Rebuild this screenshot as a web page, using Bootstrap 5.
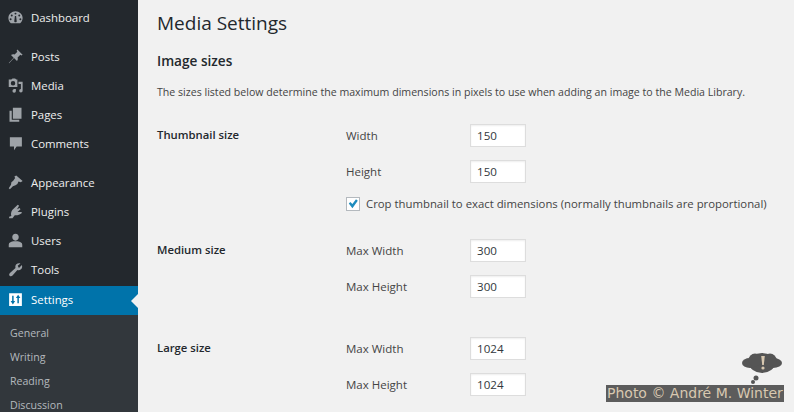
<!DOCTYPE html>
<html lang="en">
<head>
<meta charset="utf-8">
<title>Media Settings</title>
<link href="https://cdn.jsdelivr.net/npm/bootstrap@5.3.0/dist/css/bootstrap.min.css" rel="stylesheet">
<style>
html,body{height:412px;overflow:hidden}
body{background:#f1f1f1;font-family:"Open Sans","Noto Sans",sans-serif;font-size:12px;color:#444}
.wp-side{width:138px;height:412px;background:#23282d;flex:none;overflow:hidden;padding-top:4px}
.wp-group{margin-bottom:10px}
.wp-item{height:29px;padding-left:8px;padding-bottom:2px;gap:8px;color:#eee;font-size:11.4px;position:relative}
.wp-item svg{width:15px;height:15px;fill:#9ea3a8;flex:none}
.wp-item.is-on{background:#0073aa;color:#fff;margin-top:1px}
.wp-item.is-on svg{fill:#fff}
.wp-item.is-on::after{content:"";position:absolute;right:0;top:8px;border:7px solid transparent;border-right-color:#f1f1f1;border-left:0}
.wp-sub{background:#32373c;padding-top:6px;height:100px;margin-top:-10px}
.wp-sub div{height:24px;line-height:24px;padding-left:10px;color:#b4b9be;font-size:10.6px}
.wp-main{padding:0 0 0 19px;flex:1}
.wp-title{font-size:19px;font-weight:400;color:#23282d;margin:0;padding-top:9px;line-height:28px;height:38px}
.wp-h2{font-size:13.6px;font-weight:600;color:#23282d;margin:0;padding-top:13px;line-height:19px;height:46px}
.wp-p{font-size:10.6px;line-height:16px;margin:0 0 24px;color:#444;height:16px;white-space:nowrap}
.wp-row{display:flex}
.wp-th{width:189px;flex:none;font-weight:600;color:#23282d;font-size:11.3px;line-height:17px;padding-top:2px}
.wp-fields{flex:1}
.wp-f{display:flex;align-items:center;height:23px;margin-bottom:13px;font-size:11.5px}
.wp-f label{width:124px;flex:none;margin:0}
.wp-in{width:56px;height:23px;background:#fff;border:1px solid #ddd;box-shadow:inset 0 1px 2px rgba(0,0,0,.07);padding:0 6px;font:11.6px "Open Sans",sans-serif;color:#32373c;border-radius:0;outline:0}
.wp-check{display:flex;align-items:center;gap:6px;height:17px;margin:-1px 0 27px;font-size:11.35px;white-space:nowrap}
.wp-box{width:14px;height:14px;background:#fff;border:1px solid #b4b9be;flex:none;display:flex}
.wp-box svg{width:12px;height:12px;fill:#1e8cbe}
.wp-large{margin-top:26px}
.wp-credit{position:absolute;left:606px;top:385px;width:178px;height:17px;background:#5c5c5c;color:#d8c8b0;font:14px/17px "DejaVu Sans",sans-serif;white-space:nowrap;padding-left:1px;overflow:hidden}
.wp-bubble{position:absolute;left:741px;top:352px;width:42px;height:33px}
</style>
</head>
<body>
<div class="d-flex">
  <nav class="wp-side">
    <div class="wp-group">
      <div class="wp-item d-flex align-items-center"><svg viewBox="0 0 20 20"><path d="M3.800 17.800C1.900 16 .5 13.500.5 10.500.5 5.500 5 1.500 10 1.500s9.500 4 9.500 9c0 3-1.400 5.500-3.300 7.300zM10 3.500a1.300 1.300 0 1 0 0 2.600 1.300 1.300 0 0 0 0-2.600zM5 6a1.300 1.300 0 1 0 0 2.600A1.300 1.300 0 0 0 5 6zm10 0a1.300 1.300 0 1 0 0 2.600A1.300 1.300 0 0 0 15 6zM3.500 11a1.300 1.300 0 1 0 0 2.600 1.300 1.300 0 0 0 0-2.600zm13 0a1.300 1.300 0 1 0 0 2.600 1.300 1.300 0 0 0 0-2.600zM9.200 8l-.7 6a1.700 1.700 0 1 0 3 0l-.7-6z" fill-rule="evenodd"/></svg>Dashboard</div>
    </div>
    <div class="wp-group">
      <div class="wp-item d-flex align-items-center"><svg viewBox="0 0 20 20"><path d="M12.500.5 19.500 7.500 17.800 8.500 16.500 7.500 12.800 11.200c.6 1.800.2 3.600-.8 4.800L8 12 1.500 19 1 18.500 7.500 11.500 4 8c1.200-1.100 3-1.400 4.800-.8L12.500 3.500 11.500 2.200z"/></svg>Posts</div>
      <div class="wp-item d-flex align-items-center"><svg viewBox="0 0 20 20"><path d="M1 2h3.500L6 .5h3.500L11 2h1.500v10H1zm5.700 2a3 3 0 1 0 0 6 3 3 0 0 0 0-6zM14 5h5.500v12a2.300 2.300 0 1 1-2.300-2.200V8H14zM6 14.500h4.500v2.700a2.300 2.300 0 1 1-2.300-2.200z" fill-rule="evenodd"/></svg>Media</div>
      <div class="wp-item d-flex align-items-center"><svg viewBox="0 0 20 20"><path d="M6.500 1H18v14.500H6.500zM2 5h3v12h10v2.500H2z"/></svg>Pages</div>
      <div class="wp-item d-flex align-items-center"><svg viewBox="0 0 20 20"><path d="M2.500 1.500h16v12.500h-7l-3.500 5V14H2.500z"/></svg>Comments</div>
    </div>
    <div class="wp-group">
      <div class="wp-item d-flex align-items-center"><svg viewBox="0 0 20 20"><path d="M11 .5l8.500 7.500-2.500 1.500-3-1-1.500 3.500-2.500 1.500-3.500 1.500L2.500 19 1 17.500l3-4.500.5-3.500L7 7.500l2.500-3.500-1-2z"/></svg>Appearance</div>
      <div class="wp-item d-flex align-items-center"><svg viewBox="0 0 20 20"><path d="M13 1l1.800 1.200L12 7l3.500-1.800 1.200 1.800-4 3.500H18l.5 1.500c-3 2.500-6.500 3.500-9.500 3L6 19H1.500v-2l3-1c-1-2.500-.5-6 1.500-8.500z"/></svg>Plugins</div>
      <div class="wp-item d-flex align-items-center"><svg viewBox="0 0 20 20"><path d="M10 1a4.300 4.300 0 0 1 4.300 4.800c0 2.200-1.600 4.400-4.300 4.400S5.700 8 5.700 5.800A4.300 4.300 0 0 1 10 1zM7 11h6c3.500.5 6 2 6 4.500V19H1v-3.500C1 13 3.500 11.500 7 11z"/></svg>Users</div>
      <div class="wp-item d-flex align-items-center"><svg viewBox="0 0 20 20"><path d="M18.500 4c.8 2.200.3 4.500-1.200 5.800-1.300 1.200-3.200 1.400-4.800.9L6 18c-1 1.200-2.800 1.300-3.800.3-1-1-.8-2.600.4-3.700l7.400-6.600c-.5-1.700-.2-3.600 1.100-4.900 1.400-1.400 3.600-1.900 5.500-1.100l-3.700 3 1.700 3z"/></svg>Tools</div>
      <div class="wp-item is-on d-flex align-items-center"><svg viewBox="0 0 20 20"><path d="M1.500 1.500h17v17h-17zM5.500 5v7H3.500L6.500 16.500 9.500 12h-2V5zm7 10h2V8h2L13.500 3.500 10.500 8h2z" fill-rule="evenodd"/></svg>Settings</div>
    </div>
    <div class="wp-sub">
      <div>General</div>
      <div>Writing</div>
      <div>Reading</div>
      <div>Discussion</div>
    </div>
  </nav>
  <main class="wp-main">
    <h1 class="wp-title">Media Settings</h1>
    <h2 class="wp-h2">Image sizes</h2>
    <p class="wp-p">The sizes listed below determine the maximum dimensions in pixels to use when adding an image to the Media Library.</p>
    <div class="wp-row">
      <div class="wp-th">Thumbnail size</div>
      <div class="wp-fields">
        <div class="wp-f"><label>Width</label><input class="wp-in" value="150"></div>
        <div class="wp-f"><label>Height</label><input class="wp-in" value="150"></div>
        <div class="wp-check"><span class="wp-box"><svg viewBox="0 0 20 20"><path d="M3 9l2.500-2.500L9 10l6-8 3 2.500L9 17z"/></svg></span>Crop thumbnail to exact dimensions (normally thumbnails are proportional)</div>
      </div>
    </div>
    <div class="wp-row">
      <div class="wp-th">Medium size</div>
      <div class="wp-fields">
        <div class="wp-f"><label>Max Width</label><input class="wp-in" value="300"></div>
        <div class="wp-f"><label>Max Height</label><input class="wp-in" value="300"></div>
      </div>
    </div>
    <div class="wp-row wp-large">
      <div class="wp-th">Large size</div>
      <div class="wp-fields">
        <div class="wp-f"><label>Max Width</label><input class="wp-in" value="1024"></div>
        <div class="wp-f"><label>Max Height</label><input class="wp-in" value="1024"></div>
      </div>
    </div>
  </main>
</div>
<svg class="wp-bubble" viewBox="0 0 42 33"><g fill="#555"><ellipse cx="21" cy="11" rx="13" ry="10"/><ellipse cx="9" cy="11" rx="8" ry="5"/><ellipse cx="32" cy="11" rx="9" ry="5"/><circle cx="14" cy="8" r="6.500"/><circle cx="29" cy="8" r="6.500"/><circle cx="15" cy="26" r="2.500"/><circle cx="12" cy="30" r="2"/></g><path d="M20.200 4h3.600l-1 9h-1.600z" fill="#d8c8b0"/><circle cx="22" cy="16" r="1.600" fill="#d8c8b0"/></svg>
<div class="wp-credit">Photo © André M. Winter</div>
<script src="https://cdn.jsdelivr.net/npm/bootstrap@5.3.0/dist/js/bootstrap.bundle.min.js"></script>
</body>
</html>
